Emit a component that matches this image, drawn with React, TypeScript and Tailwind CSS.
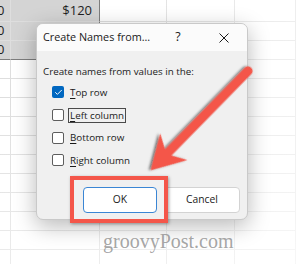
import { Check } from "lucide-react";

const cols = [0, 1, 2, 3, 4];
const rows = Array.from({ length: 14 }, (_, i) => i);

const options = [
  { key: "T", rest: "op row", checked: true, focus: false },
  { key: "L", rest: "eft column", checked: false, focus: true },
  { key: "B", rest: "ottom row", checked: false, focus: false },
  { key: "R", rest: "ight column", checked: false, focus: false },
];

function clsx(...parts: (string | false | undefined)[]) {
  return parts.filter(Boolean).join(" ");
}

function Sheet() {
  return (
    <div className="grid grid-cols-[11px_89px_67px_68px_61px] grid-rows-[22px_repeat(13,19px)] text-[13px] text-[#1f1f1f]">
      {rows.map((r) =>
        cols.map((c) => {
          const selected = r < 3 && c < 2;
          return (
            <div
              key={`${r}-${c}`}
              className={clsx(
                "flex items-center overflow-hidden border-r border-b border-[#dedede]",
                selected && "bg-[#d4d4d4] border-[#c4c4c4]",
                selected && c === 1 && "border-r-[#7d7d7d]",
                selected && r === 2 && "border-b-[#7d7d7d]",
                c === 1 ? "justify-end pr-[7px]" : "justify-start"
              )}
            >
              {selected && c === 0 && <span className="-ml-[3px]">0</span>}
              {r === 0 && c === 1 && <span>$120</span>}
            </div>
          );
        })
      )}
    </div>
  );
}

function Checkbox({ checked }: { checked: boolean }) {
  if (checked) {
    return (
      <span className="flex h-[12px] w-[12px] items-center justify-center rounded-[2px] bg-[#0067c0]">
        <Check className="h-[9px] w-[9px] text-white" strokeWidth={2.5} />
      </span>
    );
  }
  return <span className="h-[12px] w-[12px] rounded-[2px] border border-[#5d5d5d] bg-white" />;
}

function Dialog() {
  return (
    <div className="absolute left-[36px] top-[23px] flex h-[197px] w-[212px] flex-col overflow-hidden rounded-[7px] border border-[#c9c9c9] bg-[#f0f0f0] shadow-[0_6px_22px_rgba(0,0,0,0.28)]">
      <div className="flex h-[27px] items-center bg-[#fbfbfb] pl-[6px] text-[10.8px] text-[#1a1a1a]">
        <span className="min-w-0 flex-1 whitespace-nowrap">Create Names from...</span>
        <span className="flex w-[46px] shrink-0 justify-center text-[12.5px]">?</span>
        <span className="flex w-[46px] shrink-0 justify-center">
          <svg width="10" height="10" viewBox="0 0 10 10">
            <path d="M0.5 0.5 L9.5 9.5 M9.5 0.5 L0.5 9.5" stroke="#1a1a1a" strokeWidth="1" />
          </svg>
        </span>
      </div>
      <div className="flex flex-1 flex-col px-[6px] pt-[14px] pb-[6px] text-[9.8px] text-[#1a1a1a]">
        <p className="h-[14px] whitespace-nowrap leading-[14px]">Create names from values in the:</p>
        <div className="mt-[2px] flex flex-col pl-[9px]">
          {options.map((o) => (
            <label key={o.key} className="flex h-[22.7px] items-center gap-[4px]">
              <Checkbox checked={o.checked} />
              <span
                className={clsx(
                  "px-[1px] leading-[13px]",
                  o.focus ? "border border-[#4a4a4a]" : "border border-transparent"
                )}
              >
                <span className="underline underline-offset-2">{o.key}</span>
                {o.rest}
              </span>
            </label>
          ))}
        </div>
        <div className="mt-auto flex justify-end gap-[7px] pr-[1px]">
          <button className="h-[26px] w-[74px] rounded-[4px] border border-[#3b86d4] bg-white text-[10.3px]">
            OK
          </button>
          <button className="h-[26px] w-[76px] rounded-[4px] border border-[#d3d3d3] bg-white text-[10.3px]">
            Cancel
          </button>
        </div>
      </div>
    </div>
  );
}

function Arrow() {
  return (
    <svg className="absolute left-0 top-0" width="296" height="264" viewBox="0 0 296 264">
      <defs>
        <filter id="sh" x="-20%" y="-20%" width="140%" height="140%">
          <feDropShadow dx="1.5" dy="1.5" stdDeviation="1.2" floodColor="#000" floodOpacity="0.55" />
        </filter>
      </defs>
      <g transform="translate(248 71) rotate(134.4)" filter="url(#sh)">
        <path
          d="M0 -4.5 L114 -4.5 L106 -19 L139 0 L106 19 L114 4.5 L0 4.5 A4.5 4.5 0 0 1 0 -4.5 Z"
          fill="#f4564a"
        />
      </g>
    </svg>
  );
}

export default function App() {
  return (
    <div className="relative h-[264px] w-[296px] overflow-hidden bg-white font-['Open_Sans',sans-serif]">
      <Sheet />
      <div className="absolute inset-0 bg-[radial-gradient(circle_at_0%_0%,rgba(255,255,255,0)_25%,rgba(255,255,255,0.75)_100%)]" />
      <Dialog />
      <div className="absolute left-[70px] top-[176px] h-[47px] w-[98px] border-[4.5px] border-[#f4564a] shadow-[1px_1px_3px_rgba(0,0,0,0.35)]" />
      <Arrow />
      <div className="absolute left-[103px] top-[228px] font-['Liberation_Serif',serif] text-[20px] leading-[26px] text-[#9a9a9a]/90">
        groovyPost.com
      </div>
    </div>
  );
}
